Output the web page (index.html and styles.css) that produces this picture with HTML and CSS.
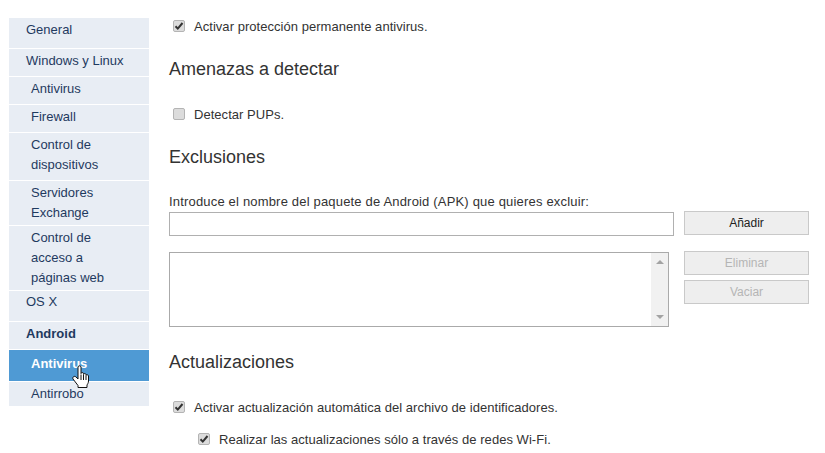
FILE: index.html
```html
<!DOCTYPE html>
<html lang="es">

<head>
  <meta charset="utf-8">
  <title>Ajustes</title>
  <link rel="stylesheet" href="styles.css">
</head>

<body>
  <div class="page">
    <ul class="menu">
      <li class="item top general">General</li>
      <li class="item top h27">Windows y Linux</li>
      <li class="item sub h27">Antivirus</li>
      <li class="item sub h27">Firewall</li>
      <li class="item sub devices">Control de dispositivos</li>
      <li class="item sub servers">Servidores Exchange</li>
      <li class="item sub web">Control de<br>acceso a<br>páginas web</li>
      <li class="item top osx">OS X</li>
      <li class="item top h27 bold">Android</li>
      <li class="item sub active">Antivirus
        <svg class="hand" width="18" height="24" viewBox="0 0 18 24">
          <path d="M6 2C6 .4 9 .4 9 2V8.500C9 7.300 11.500 7.300 11.500 8.500V9.500C11.500 8.300 14 8.300 14 9.500V10.500C14 9.300 16.500 9.500 16.500 11V16C16.500 18 15.500 19 15 20V22.500H6V20.500L1 14C0 12 2.500 10.500 4 12L6 14Z" fill="#fff" stroke="#111" stroke-linejoin="round"/>
          <path d="M9 9.500V15M11.500 10V15M14 11V15" stroke="#111" fill="none"/>
        </svg>
      </li>
      <li class="item sub last">Antirrobo</li>
    </ul>

    <main class="main">
      <label class="check first">
        <span class="box"><svg width="10" height="10" viewBox="0 0 10 10"><path d="M1.500 5.200l2.300 2.400 4.700-5.600" fill="none" stroke="#333" stroke-width="2"/></svg></span>
        Activar protección permanente antivirus.
      </label>

      <h2 class="title threats">Amenazas a detectar</h2>
      <label class="check pups">
        <span class="box"></span>
        Detectar PUPs.
      </label>

      <h2 class="title excl">Exclusiones</h2>
      <p class="hint">Introduce el nombre del paquete de Android (APK) que quieres excluir:</p>
      <div class="row">
        <div class="input"></div>
        <button type="button" class="btn">Añadir</button>
      </div>
      <div class="row list-row">
        <div class="list">
          <div class="scroll">
            <span class="arrow up"></span>
            <span class="arrow down"></span>
          </div>
        </div>
        <div class="actions">
          <button type="button" class="btn off">Eliminar</button>
          <button type="button" class="btn off">Vaciar</button>
        </div>
      </div>

      <h2 class="title updates">Actualizaciones</h2>
      <label class="check auto">
        <span class="box"><svg width="10" height="10" viewBox="0 0 10 10"><path d="M1.500 5.200l2.300 2.400 4.700-5.600" fill="none" stroke="#333" stroke-width="2"/></svg></span>
        Activar actualización automática del archivo de identificadores.
      </label>
      <label class="check nested">
        <span class="box"><svg width="10" height="10" viewBox="0 0 10 10"><path d="M1.500 5.200l2.300 2.400 4.700-5.600" fill="none" stroke="#333" stroke-width="2"/></svg></span>
        Realizar las actualizaciones sólo a través de redes Wi-Fi.
      </label>
    </main>
  </div>
</body>

</html>
```

FILE: styles.css
```css
* {
  margin: 0;
  padding: 0;
  box-sizing: border-box;
}

html,
body {
  height: 453px;
  overflow: hidden;
}

body {
  font-family: 'Liberation Sans', Arial, sans-serif;
  font-size: 13px;
  color: #333;
  background-color: #fff;
}

.page {
  display: flex;
  align-items: flex-start;
}

/* left menu */
.menu {
  list-style: none;
  width: 140px;
  margin: 18px 0 0 9px;
  flex-shrink: 0;
}

.item {
  background-color: #e8edf4;
  color: #1f3a5f;
  line-height: 20px;
  padding: 2px 10px 0 5px;
  margin-bottom: 1px;
  position: relative;
}

.top {
  padding-left: 17px;
}

.sub {
  padding-left: 22px;
}

.general {
  height: 30px;
}

.h27 {
  height: 27px;
}

.devices {
  height: 47px;
}

.servers {
  height: 44px;
}

.web {
  height: 64px;
}

.osx {
  height: 30px;
  padding-top: 1px;
}

.bold {
  font-weight: bold;
}

.active {
  background-color: #4f9ad4;
  color: #fff;
  font-weight: bold;
  height: 31px;
  padding-top: 4px;
}

.last {
  height: 24px;
  margin-bottom: 0;
}

.hand {
  position: absolute;
  left: 63px;
  top: 15px;
  z-index: 1;
}

/* right side */
.main {
  width: 640px;
  margin-left: 20px;
}

.check {
  display: flex;
  align-items: center;
  gap: 9px;
  height: 20px;
  padding-left: 4px;
  letter-spacing: .04px;
  white-space: nowrap;
}

.first {
  margin-top: 16px;
}

.pups {
  margin-top: 24px;
}

.auto {
  margin-top: 24px;
}

.nested {
  margin-top: 12px;
  padding-left: 29px;
}

.box {
  width: 12px;
  height: 12px;
  border: 1px solid #b4b4b4;
  border-radius: 2px;
  background-color: #dcdcdc;
  display: flex;
  align-items: center;
  justify-content: center;
  flex-shrink: 0;
}

.title {
  font-size: 18px;
  font-weight: normal;
  line-height: 22px;
  color: #333;
}

.threats {
  margin-top: 22px;
}

.excl {
  margin-top: 22px;
}

.updates {
  margin-top: 24px;
}

.hint {
  margin-top: 24px;
  line-height: 19px;
  letter-spacing: .18px;
}

.row {
  display: flex;
  align-items: flex-start;
}

.input {
  width: 505px;
  height: 24px;
  margin-top: 1px;
  margin-right: 10px;
  border: 1px solid #b0b0b0;
  background-color: #fff;
}

.btn {
  width: 125px;
  height: 24px;
  font-family: inherit;
  font-size: 12px;
  color: #222;
  background-color: #eeeeee;
  border: 1px solid #c9c9c9;
}

.btn.off {
  color: #b5b5b5;
}

.list-row {
  margin-top: 15px;
}

.list {
  width: 500px;
  height: 75px;
  margin-top: 1px;
  margin-right: 15px;
  border: 1px solid #aaa;
  display: flex;
  justify-content: flex-end;
}

.scroll {
  width: 17px;
  background-color: #f1f1f1;
  display: flex;
  flex-direction: column;
  justify-content: space-between;
  align-items: center;
  padding: 7px 0;
}

.arrow {
  width: 0;
  height: 0;
  border-left: 4px solid transparent;
  border-right: 4px solid transparent;
}

.arrow.up {
  border-bottom: 4px solid #a3a3a3;
}

.arrow.down {
  border-top: 4px solid #a3a3a3;
}

.actions {
  display: flex;
  flex-direction: column;
  gap: 5px;
}
```
